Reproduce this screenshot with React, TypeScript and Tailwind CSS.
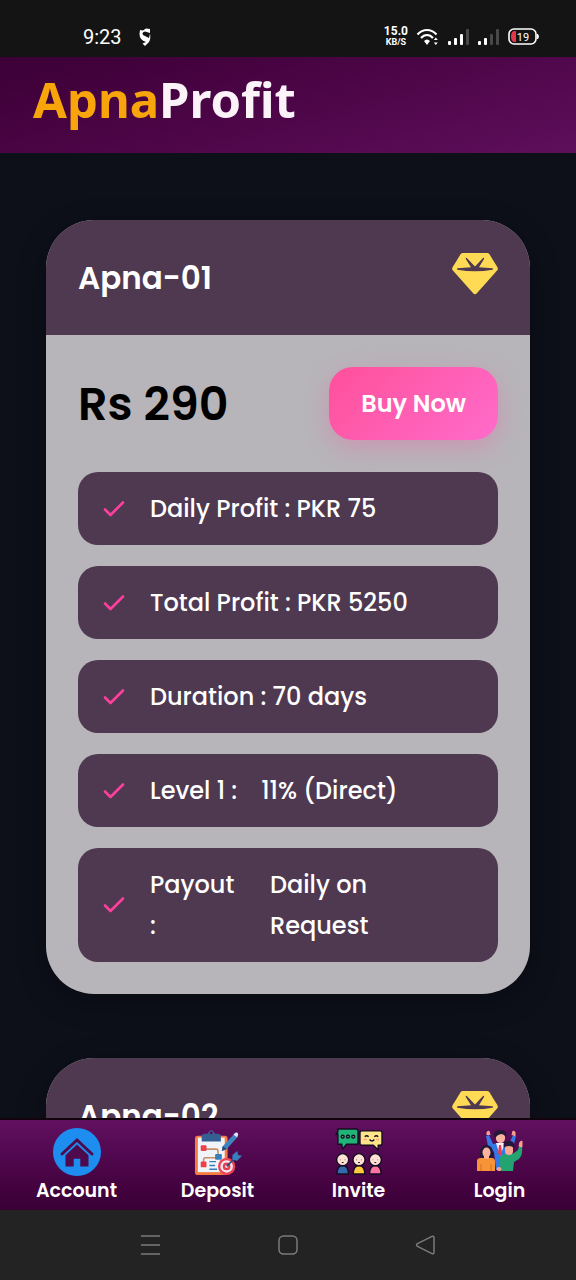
import type { ReactNode } from "react";

type Feature = {
  label: string;
  value?: string;
  wrap?: boolean;
};

type Plan = {
  name: string;
  price: string;
  features: Feature[];
};

const plans: Plan[] = [
  {
    name: "Apna-01",
    price: "Rs 290",
    features: [
      { label: "Daily Profit : PKR 75" },
      { label: "Total Profit : PKR 5250" },
      { label: "Duration : 70 days" },
      { label: "Level 1 :", value: "11% (Direct)" },
      { label: "Payout :", value: "Daily on Request", wrap: true },
    ],
  },
  { name: "Apna-02", price: "", features: [] },
];

export default function App() {
  return (
    <div className="flex h-screen flex-col overflow-hidden bg-[#0d0f19] font-['Poppins','Inter',sans-serif] text-white">
      <StatusBar />
      <header className="h-24 shrink-0 bg-linear-165 from-[#3c0036] to-[#5e0f5a] px-[33px] pt-2">
        <a href="#home" className="font-['Noto_Sans','Open_Sans',sans-serif] text-[49px] leading-[68px] font-bold text-[#f8a50c]">
          Apna<span className="text-[#fbf3f8]">Profit</span>
        </a>
      </header>

      <main className="flex min-h-0 flex-1 flex-col gap-16 overflow-y-auto px-[46px] pt-[67px] [scrollbar-width:none]">
        {plans.map((plan) => (
          <PlanCard key={plan.name} plan={plan} />
        ))}
      </main>

      <nav className="flex h-[92px] shrink-0 border-t-2 border-[#12030f] bg-linear-to-b from-[#611060] to-[#3a0035] px-1.5 pt-2">
        <NavItem label="Account" icon={<AccountIcon />} />
        <NavItem label="Deposit" icon={<DepositIcon />} />
        <NavItem label="Invite" icon={<InviteIcon />} />
        <NavItem label="Login" icon={<LoginIcon />} />
      </nav>
      <SystemBar />
    </div>
  );
}

function PlanCard({ plan }: { plan: Plan }) {
  return (
    <section className="shrink-0 overflow-hidden rounded-[48px] bg-[#b7b5ba] shadow-[0_8px_32px_rgba(0,0,0,0.2)]">
      <div className="flex h-[115px] items-center justify-between bg-[#4e3950] px-8">
        <h2 className="text-[31px] leading-10 font-semibold">{plan.name}</h2>
        <GemIcon />
      </div>
      {plan.features.length > 0 ? (
        <div className="p-8">
          <div className="flex items-center justify-between">
            <p className="text-[46px] leading-[68px] font-semibold text-black">{plan.price}</p>
            <button className="rounded-3xl bg-linear-135 from-[#ff4f9a] to-[#ff6bcb] px-8 py-4 text-2xl leading-[41px] font-semibold shadow-[0_8px_24px_rgba(255,79,154,0.3)]">
              Buy Now
            </button>
          </div>
          <ul className="mt-8 flex flex-col gap-[21px]">
            {plan.features.map((feature) => (
              <FeatureRow key={feature.label} feature={feature} />
            ))}
          </ul>
        </div>
      ) : null}
    </section>
  );
}

function FeatureRow({ feature }: { feature: Feature }) {
  return (
    <li className="flex items-center gap-6 rounded-[20px] bg-[#4e3950] px-6 py-4 text-2xl leading-[41px] font-medium">
      <svg viewBox="0 0 24 24" className="h-6 w-6 shrink-0" fill="none" stroke="#ff3f9d" strokeWidth="2.6" strokeLinecap="round" strokeLinejoin="round">
        <path d="M3 12.5 8.5 18 21 5.5" />
      </svg>
      <span className={feature.wrap ? "w-24" : ""}>{feature.label}</span>
      {feature.value ? <span className={feature.wrap ? "w-36" : ""}>{feature.value}</span> : null}
    </li>
  );
}

function NavItem({ label, icon }: { label: string; icon: ReactNode }) {
  return (
    <a href={`#${label.toLowerCase()}`} className="flex flex-1 flex-col items-center text-[19px] leading-[30px] font-semibold">
      {icon}
      {label}
    </a>
  );
}

function StatusBar() {
  return (
    <div className="flex h-[57px] shrink-0 items-center justify-between bg-[#141414] pt-4 pr-9 pl-[83px]">
      <div className="flex items-center gap-4">
        <span className="font-['Roboto',sans-serif] text-xl">9:23</span>
        <svg viewBox="0 0 14 20" className="h-5 w-3.5" fill="#fff">
          <path d="M2 3 5 3.500 8 1.500 12 2v4L7 4.500Q3.500 5 5 8l6 3q.5-2 1-4.500Q13 12 11 15l-4 4-2.500-2.500L8 15Q1.500 13 1.500 7Z" />
        </svg>
      </div>
      <div className="flex items-center gap-2">
        <div className="flex flex-col items-center font-['Roboto',sans-serif] font-bold">
          <span className="text-xs leading-3">15.0</span>
          <span className="text-[9px] leading-[11px]">KB/S</span>
        </div>
        <svg viewBox="0 0 24 20" className="h-5 w-6" fill="none" stroke="#fff" strokeWidth="2.2">
          <path d="M1.500 7.500C7 1.500 15 1.500 20.500 7.500M5 11C8.500 7 13.500 7 17 11" />
          <path d="M8 14C10 12 12 12 14 14L11 18ZM19.800 10.500l-2 2.500h4ZM19.800 18l-2-2.500h4Z" fill="#fff" stroke="none" />
        </svg>
        <SignalIcon bars={3} />
        <SignalIcon bars={2} />
        <svg viewBox="0 0 32 18" className="h-[18px] w-8">
          <rect x="1" y="1" width="27" height="15" rx="5" fill="none" stroke="#fff" strokeWidth="1.6" />
          <path d="M6 3h2v11H6C2 14 2 3 6 3Z" fill="#e2374b" />
          <path d="M29.500 6q2 2.500 0 5Z" fill="#fff" stroke="#fff" />
          <text x="15" y="12.500" textAnchor="middle" fill="#fff" fontSize="11" fontFamily="Roboto, sans-serif">19</text>
        </svg>
      </div>
    </div>
  );
}

function SignalIcon({ bars }: { bars: number }) {
  return (
    <svg viewBox="0 0 22 18" className="h-[18px] w-[22px]">
      <rect x="0" y="13" width="3" height="4" rx="1" fill="#fff" />
      <rect x="6" y="10" width="3" height="7" rx="1" fill="#fff" />
      <rect x="12" y="6" width="3" height="11" rx="1" fill={bars > 2 ? "#fff" : "#484848"} />
      <rect x="18" y="1" width="3" height="16" rx="1" fill="#484848" />
    </svg>
  );
}

function SystemBar() {
  return (
    <div className="flex h-[70px] shrink-0 items-center justify-between bg-[#232323] px-[139px]">
      <button aria-label="Recent apps">
        <svg viewBox="0 0 22 22" className="h-[22px] w-[22px]" stroke="#7b7b7b" strokeWidth="1.5">
          <path d="M2 2h19M2 11h19M2 20h19" />
        </svg>
      </button>
      <button aria-label="Home">
        <svg viewBox="0 0 22 22" className="h-[22px] w-[22px]" fill="none" stroke="#7b7b7b" strokeWidth="1.5">
          <rect x="2" y="2" width="18" height="18" rx="4.5" />
        </svg>
      </button>
      <button aria-label="Back">
        <svg viewBox="0 0 22 22" className="h-[22px] w-[22px]" fill="none" stroke="#7b7b7b" strokeWidth="1.5">
          <path d="M2.500 9.700 17 2.400Q19 1.500 19 4v14q0 2.500-2 1.600L2.500 12.300Q.5 11 2.500 9.700Z" />
        </svg>
      </button>
    </div>
  );
}

function GemIcon() {
  return (
    <svg viewBox="0 0 48 44" className="mb-2 h-11 w-12">
      <path d="M13 1h24q1.500 0 2.400 1.300L47.300 15q1.200 2-.2 3.600L26.600 41.500q-1.600 1.600-3.200 0L2.900 18.600Q1.500 17 2.700 15L10.600 2.300Q11.500 1 13 1Z" fill="#ffda55" />
      <path d="M7.500 16.200 21 15.300 15.800 7q-.5-1.800 1-1L25 14.600 33 6q1.600-.8 1 1L29 15.300l13.500.9q1.400.8 0 1.600Q25 20.800 7.500 17.800q-1.400-.8 0-1.600Z" fill="#4e3950" />
    </svg>
  );
}

function AccountIcon() {
  return (
    <svg viewBox="0 0 48 48" className="h-12 w-12">
      <circle cx="24" cy="24" r="24" fill="#1d8df0" />
      <path d="m9 26 15-14 15 14" fill="none" stroke="#4f0a4d" strokeWidth="3" strokeLinecap="round" />
      <path d="m24 16.500 11.500 10.700V38.500h-8.200v-7.700h-6.600v7.700h-8.200V27.200Z" fill="#4f0a4d" />
    </svg>
  );
}

function DepositIcon() {
  return (
    <svg viewBox="0 0 50 50" className="h-12 w-[50px]">
      <rect x="1" y="8" width="34" height="41" rx="3" fill="#f47c42" />
      <path d="M4 10h28v36H4Z" fill="#f1f3fa" />
      <path d="M8 9q0-3 3-3h3q4-8 8 0h3q3 0 3 3v5H8Z" fill="#365f91" />
      <circle cx="18" cy="5" r="1.600" fill="#611060" />
      <path d="M12 22h11q2 0 2 2v5M24 31H12q-2 0-2 2v5" fill="none" stroke="#c78d66" strokeWidth="1.600" />
      <rect x="7" y="18" width="6" height="6" rx="1" fill="#ed4048" />
      <rect x="7" y="35" width="6" height="6" rx="1" fill="#ed4048" />
      <rect x="22" y="27" width="7" height="6" rx="1" fill="#357fba" />
      <path d="M16 35h7M16 39h6M16 43h8" stroke="#357fba" strokeWidth="1.500" />
      <path d="m30 19 11-12 4 3-11 12-5 2Z" fill="#3d83bf" />
      <path d="m41 7 2-2q3-1 3 2l-1 3Z" fill="#dbe6ff" />
      <path d="m30 19-1 5 5-2Z" fill="#234574" />
      <circle cx="34" cy="40" r="9" fill="#ee4654" />
      <circle cx="34" cy="40" r="6.500" fill="#f5e9f1" />
      <circle cx="34" cy="40" r="4" fill="#e53d50" />
      <circle cx="34" cy="40" r="1.500" fill="#fff" />
      <path d="m34 40 9-9" stroke="#214b7d" strokeWidth="1.600" />
      <path d="m40 33 0-5 5-4 1 4 4 1-5 5Z" fill="#357fba" />
    </svg>
  );
}

function InviteIcon() {
  return (
    <svg viewBox="0 0 50 50" className="h-12 w-[50px]" stroke="#160d23" strokeWidth="1.5" strokeLinejoin="round">
      <path d="M3 1h19q2 0 2 2v12q0 2-2 2H12l-4 5-1-5H3V6L1 7 3 4Z" fill="#20b477" />
      <path d="M28 3h19q2 0 2 2v11q0 2-2 2h-2v5l-5-5H28q-2 0-2-2V5q0-2 2-2Z" fill="#ffe58a" />
      <circle cx="8" cy="9" r="1.500" fill="#79cda5" />
      <circle cx="13.500" cy="9" r="1.500" fill="#79cda5" />
      <circle cx="19" cy="9" r="1.500" fill="#79cda5" />
      <path d="M31 9q2-2 4 0M41 9q2-2 4 0M36 12q2.500 3 5 0" fill="none" />
      <path d="M30 12h3M43 12h3" stroke="#ff9c8c" />
      <path d="M2 48q0-9 6-9t6 9Z" fill="#3569ad" />
      <path d="M19 48q0-9 6-9t6 9Z" fill="#ffc83f" />
      <path d="M36 48q0-9 6-9t6 9Z" fill="#ff72a1" />
      {[8, 25, 42].map((x) => (
        <g key={x}>
          <circle cx={x} cy="33" r="6.300" fill="#ffe2d3" />
          <path d={`M${x - 2.5} 33v.5M${x + 2.5} 33v.5M${x - 1} 36h2`} strokeWidth="1" />
        </g>
      ))}
    </svg>
  );
}

function LoginIcon() {
  return (
    <svg viewBox="0 0 48 48" className="h-12 w-12">
      <path d="M10 8 13 7l4 9 5-1h6l6-1 3-7 3 1-3 12-5 4-2 18H20l-2-18-6-6Z" fill="#3478e5" />
      <path d="M11 7V4l2-1 1 4M36 7l1-4 2 1v4" fill="#f7a08d" stroke="#f7a08d" />
      <path d="m20 15 4 13 5-13Z" fill="#f6eeff" />
      <path d="m23 17-1 8 2 3 2-3-1-8Z" fill="#e73c4d" />
      <rect x="20" y="4" width="9" height="11" rx="4.500" fill="#f9b49e" />
      <path d="M18 9q-1-7 6-7 8 0 6 7-2-3-5-3-4 1-5 3Z" fill="#251739" />
      <path d="m43 18 3 1q1 8-3 12l-5 3-1 9H23l1-13q1-4 6-4h6q4-2 6-4Z" fill="#22a36f" />
      <path d="m43 18 1-4 2-1v6Z" fill="#f7a08d" stroke="#f7a08d" />
      <rect x="29" y="16" width="8" height="11" rx="4" fill="#f9a893" />
      <path d="M28 20q-2-7 4-7 8-1 6 8-1-3-5-3-4 0-5 2Z" fill="#251739" />
      <ellipse cx="23" cy="41" rx="2.500" ry="2" fill="#f7a08d" />
      <path d="M1 43V33q0-3 4-3l3-1h5l3 1q3 0 3 4v9Z" fill="#f79438" />
      <path d="M5 36v7M15 36v7" stroke="#d46e2d" />
      <path d="M4 29q-1-12 6-12 8 0 7 12l-3 1H6Z" fill="#251739" />
      <ellipse cx="10.500" cy="24.500" rx="4" ry="5" fill="#f9b49e" />
      <path d="M8 28h5v2q-2.500 2-5 0Z" fill="#f9b49e" />
    </svg>
  );
}
